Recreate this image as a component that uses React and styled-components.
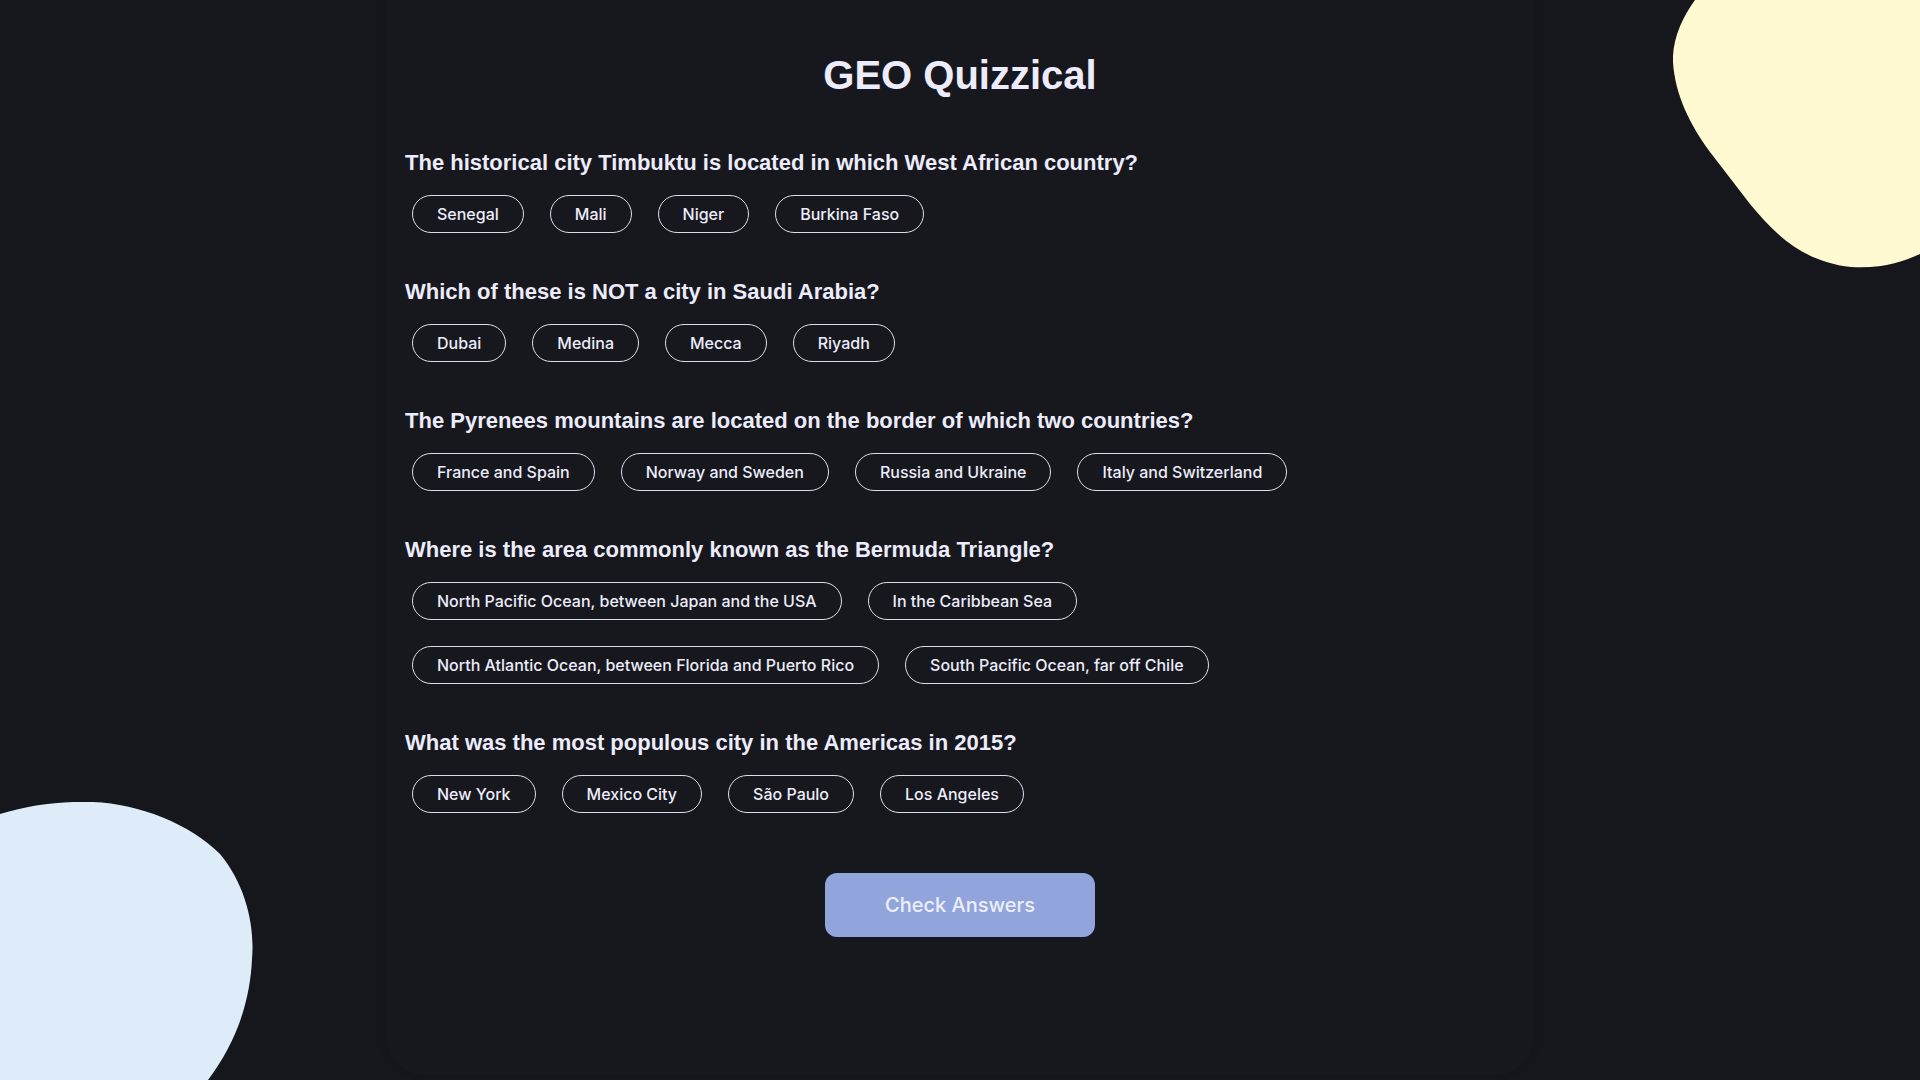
import React from "react";
import styled, { createGlobalStyle } from "styled-components";

const GlobalStyle = createGlobalStyle`
  html, body {
    margin: 0;
    padding: 0;
    background: #16171c;
  }
  * {
    box-sizing: border-box;
  }
`;

const Page = styled.main`
  position: relative;
  min-height: 1080px;
  overflow: hidden;
  background: #16171c;
`;

const Blob = styled.svg`
  position: absolute;
  ${({ corner }) =>
    corner === "top-right" ? "top: 0; right: 0;" : "bottom: 0; left: 0;"}
  display: block;
`;

const Card = styled.section`
  position: relative;
  width: 1150px;
  min-height: 1075px;
  margin: 0 auto;
  padding: 52px 20px 40px;
  background: #17181d;
  border-radius: 0 0 40px 40px;
  box-shadow: 0 0 8px rgba(0, 0, 0, 0.06);
`;

const Title = styled.h1`
  margin: 0 0 52px;
  text-align: center;
  font-family: "Liberation Sans", Arial, sans-serif;
  font-weight: 700;
  font-size: 40px;
  line-height: 46px;
  color: #ececfc;
`;

const QuestionBlock = styled.div`
  margin-bottom: 46px;
`;

const Question = styled.h2`
  margin: 0 0 19px;
  font-family: "Liberation Sans", Arial, sans-serif;
  font-weight: 700;
  font-size: 22px;
  line-height: 26px;
  color: #ececfc;
`;

const Answers = styled.div`
  display: flex;
  flex-wrap: wrap;
  gap: 26px;
  padding-left: 7px;
`;

const Answer = styled.button`
  height: 38px;
  padding: 0 24px;
  border: 1px solid #dcdcee;
  border-radius: 19px;
  background: transparent;
  font-family: Inter, "Noto Sans", sans-serif;
  font-weight: 500;
  font-size: 16px;
  color: #ececfc;
  cursor: pointer;
`;

const Footer = styled.div`
  display: flex;
  justify-content: center;
  padding-top: 14px;
`;

const CheckButton = styled.button`
  width: 270px;
  height: 64px;
  border: none;
  border-radius: 12px;
  background: #91a5dc;
  font-family: Inter, "Noto Sans", sans-serif;
  font-weight: 500;
  font-size: 20px;
  color: #eceffb;
  cursor: pointer;
`;

const questions = [
  {
    q: "The historical city Timbuktu is located in which West African country?",
    a: ["Senegal", "Mali", "Niger", "Burkina Faso"],
  },
  {
    q: "Which of these is NOT a city in Saudi Arabia?",
    a: ["Dubai", "Medina", "Mecca", "Riyadh"],
  },
  {
    q: "The Pyrenees mountains are located on the border of which two countries?",
    a: ["France and Spain", "Norway and Sweden", "Russia and Ukraine", "Italy and Switzerland"],
  },
  {
    q: "Where is the area commonly known as the Bermuda Triangle?",
    a: [
      "North Pacific Ocean, between Japan and the USA",
      "In the Caribbean Sea",
      "North Atlantic Ocean, between Florida and Puerto Rico",
      "South Pacific Ocean, far off Chile",
    ],
  },
  {
    q: "What was the most populous city in the Americas in 2015?",
    a: ["New York", "Mexico City", "São Paulo", "Los Angeles"],
  },
];

export default function App() {
  return (
    <>
      <GlobalStyle />
      <Page>
        <Blob corner="top-right" width="247" height="268" viewBox="0 0 247 268">
          <path
            d="M22,0 C9,18 -1,40 0,62 C2,95 17,125 37,152 L77,204 C104,237 132,262 178,267 C208,269 230,262 247,254 L247,0 Z"
            fill="#fffad1"
          />
        </Blob>
        <Blob corner="bottom-left" width="253" height="278" viewBox="0 0 253 278">
          <path
            d="M0,12 C30,3 60,-1 93,0 C140,2 190,22 220,52 C245,82 255,122 252,157 C250,202 235,242 208,278 L0,278 Z"
            fill="#deebf8"
          />
        </Blob>
        <Card>
          <Title>GEO Quizzical</Title>
          {questions.map((item) => (
            <QuestionBlock key={item.q}>
              <Question>{item.q}</Question>
              <Answers>
                {item.a.map((ans) => (
                  <Answer key={ans}>{ans}</Answer>
                ))}
              </Answers>
            </QuestionBlock>
          ))}
          <Footer>
            <CheckButton>Check Answers</CheckButton>
          </Footer>
        </Card>
      </Page>
    </>
  );
}
